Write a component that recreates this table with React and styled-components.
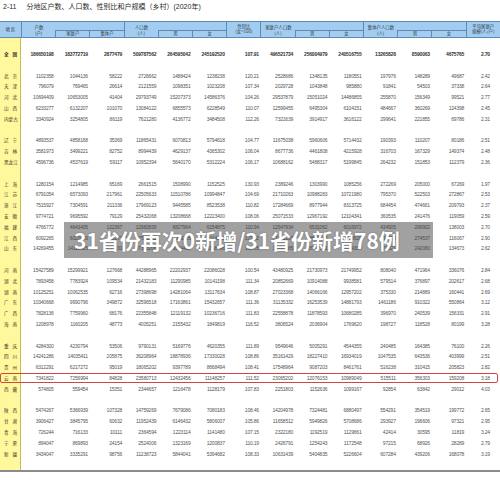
import React from 'react';
import styled, { createGlobalStyle } from 'styled-components';

const GlobalStyle = createGlobalStyle`
  html, body {
    margin: 0;
    padding: 0;
    background: #fff;
  }
  body {
    font-family: 'Liberation Sans', Arial, sans-serif;
  }
`;

const COLS = '21px repeat(14, 34.214px)';
const LINE = '#5f8ab5';

const Page = styled.div`
  position: relative;
  width: 500px;
  height: 481px;
  overflow: hidden;
  background: #fff;
`;

const Title = styled.div`
  height: 20.5px;
  box-sizing: border-box;
  padding: 2.5px 0 0 3px;
  font-family: 'Liberation Sans', 'Noto Sans CJK SC', sans-serif;
  font-size: 7px;
  line-height: 8px;
  color: #2a2a2a;
  white-space: nowrap;

  b {
    font-weight: 400;
    margin-right: 10px;
  }
`;

const Head = styled.div`
  display: grid;
  grid-template-columns: ${COLS};
  grid-template-rows: 8.5px 7px;
  background: #a3cdf0;
  border-top: 0.8px solid ${LINE};
  border-bottom: 0.8px solid ${LINE};
  font-family: 'Noto Sans CJK SC', sans-serif;
  font-size: 4.4px;
  color: #2e3a47;
`;

const HeadCell = styled.div`
  grid-column: ${(p) => p.$col};
  grid-row: ${(p) => p.$row};
  display: flex;
  flex-direction: column;
  align-items: center;
  justify-content: center;
  line-height: 5.4px;
  white-space: nowrap;
  border-left: ${(p) => (p.$left ? `0.8px solid ${LINE}` : 'none')};
  border-top: ${(p) => (p.$top ? `0.8px solid ${LINE}` : 'none')};
  background: ${(p) => (p.$region ? '#a3cdf0' : 'transparent')};
`;

const GroupHead = styled.div`
  grid-column: ${(p) => p.$col};
  grid-row: 1;
  display: flex;
  align-items: flex-end;
  border-left: 0.8px solid ${LINE};
  white-space: nowrap;
`;

const GroupLabel = styled.span`
  width: 33.333%;
  text-align: center;
  line-height: 6px;
`;

const Body = styled.div`
  padding: 10.7px 0 11.3px;
  background: linear-gradient(
    to right,
    #fff89c 0,
    #fff89c 20.3px,
    #c8b95a 20.3px,
    #c8b95a 21px,
    #fff 21px
  );
  border-bottom: 2px solid #8c8c8c;
`;

const Row = styled.div`
  position: relative;
  display: grid;
  grid-template-columns: ${COLS};
  height: 10.8px;
  align-items: center;
  font-weight: ${(p) => (p.$total ? 700 : 400)};

  ${(p) =>
    p.$mark &&
    `
    &::after {
      content: '';
      position: absolute;
      left: 0;
      right: 2px;
      top: 0.6px;
      bottom: 0.2px;
      border: 1.2px solid #d3463f;
      border-radius: 2px;
    }
  `}
`;

const Spacer = styled.div`
  height: 10.8px;
`;

const Label = styled.div`
  padding-left: 4px;
  font-family: 'Noto Sans CJK SC', sans-serif;
  font-size: 4.6px;
  line-height: 6px;
  letter-spacing: ${(p) => (p.$spread ? '3.8px' : '0')};
  color: #3a3426;
  white-space: nowrap;
`;

const Num = styled.div`
  text-align: right;
  padding-right: ${(p) => (p.$last ? '10px' : '1.5px')};
  font-size: 5px;
  line-height: 6px;
  letter-spacing: -0.2px;
  color: ${(p) => (p.$total ? '#333' : '#555')};
  white-space: nowrap;
`;

const Banner = styled.div`
  position: absolute;
  left: 64px;
  top: 222px;
  width: 369px;
  height: 36px;
  box-sizing: border-box;
  padding-left: 10px;
  display: flex;
  align-items: center;
  background: rgba(68, 68, 68, 0.5);
  color: #fff;
  font-family: 'Noto Sans CJK SC', sans-serif;
  font-weight: 700;
  font-size: 21px;
  white-space: nowrap;
  text-shadow: 0 0 2px rgba(0, 0, 0, 0.35);
`;

const total = ['全国', '186650198', '183772719', '2877479', '509787562', '264595042', '245192520', '107.91', '496521734', '256004979', '240516755', '13265828', '8590063', '4675765', '2.70'];

const groups = [
  [
    ['北京', '1102358', '1044136', '58222', '2726662', '1488424', '1238238', '120.21', '2528686', '1348135', '1180551', '197976', '148289', '49687', '2.42'],
    ['天津', '796079', '769465', '26614', '2121559', '1098351', '1023208', '107.34', '2029728', '1043848', '985880', '91841', '54503', '37338', '2.64'],
    ['河北', '10694409', '10653005', '41404', '29793749', '15207373', '14586376', '104.26', '29537879', '15051024', '14486855', '255870', '156349', '99521', '2.77'],
    ['山西', '6233277', '6132207', '101070', '13084122', '6855573', '6228549', '110.07', '12599455', '6495304', '6104151', '484667', '360269', '124398', '2.45'],
    ['内蒙古', '3340924', '3254805', '86119', '7621280', '4136772', '3484508', '112.26', '7321639', '3914917', '3616122', '299641', '221855', '69786', '2.31'],
  ],
  [
    ['辽宁', '4893537', '4858168', '35369', '11865431', '6070813', '5794618', '104.77', '11675038', '5960606', '5714432', '190393', '110207', '80186', '2.51'],
    ['吉林', '3581973', '3499221', '82752', '8994439', '4629137', '4365302', '106.04', '8677736', '4461808', '4215928', '316703', '167329', '149374', '2.48'],
    ['黑龙江', '4596736', '4537619', '59117', '10952394', '5640170', '5312224', '106.17', '10688162', '5488317', '5199845', '264232', '151853', '112379', '2.36'],
  ],
  [
    ['上海', '1280154', '1214985', '65169', '2661515', '1508990', '1152525', '130.93', '2389246', '1303990', '1085256', '272269', '205000', '67269', '1.97'],
    ['江苏', '6791054', '6573093', '217961', '22505633', '11510786', '10994847', '104.69', '21710263', '10988283', '10721980', '795370', '522503', '272867', '2.53'],
    ['浙江', '7515927', '7304591', '211336', '17969123', '9445585', '8523538', '110.82', '17284669', '8977944', '8313725', '684454', '474661', '209793', '2.37'],
    ['安徽', '9774721', '9695592', '79129', '25432068', '13208668', '12223400', '108.06', '25071533', '12967192', '12104341', '360535', '241476', '119059', '2.59'],
    ['福建', '4766772', '4643405', '122367', '12982839', '6827964', '6154875', '110.94', '12547934', '6531062', '6016972', '434905', '296902', '138003', '2.70'],
    ['江西', '6092265', '6022093', '70172', '17532911', '9088216', '8444695', '107.62', '17142307', '8813679', '8328628', '390604', '274537', '116067', '2.90'],
    ['山东', '14269455', '14115825', '153630', '37363206', '19024410', '18338796', '103.65', '36991885', '18727581', '18264304', '371321', '242060', '134673', '2.62'],
  ],
  [
    ['河南', '15427589', '15299921', '127668', '44288965', '22202937', '22086028', '100.54', '43480925', '21730973', '21749952', '808040', '471964', '336076', '2.84'],
    ['湖北', '7893458', '7783924', '109534', '21432183', '11290985', '10141198', '111.34', '20852669', '10914088', '9938581', '579514', '376897', '202617', '2.68'],
    ['湖南', '10125251', '10062535', '62716', '27398698', '14281064', '13117634', '108.87', '27023368', '14066166', '12957202', '375330', '214889', '160441', '2.69'],
    ['广东', '10340668', '9990796', '349872', '32596518', '17163861', '15432657', '111.36', '31135332', '16253539', '14881793', '1461186', '910322', '550864', '3.12'],
    ['广西', '7828136', '7759960', '68176', '22355848', '12119132', '10236716', '111.83', '22558878', '11878593', '10680285', '396970', '240539', '156331', '2.91'],
    ['海南', '1208978', '1160205', '48773', '4005251', '2155432', '1849819', '116.52', '3806524', '2036904', '1769620', '198727', '118528', '80199', '3.28'],
  ],
  [
    ['重庆', '4284300', '4230794', '53506', '9790131', '5169776', '4620355', '111.89', '9549646', '5005291', '4544355', '240485', '164385', '76100', '2.26'],
    ['四川', '14241286', '14035411', '205875', '36208964', '18878936', '17330028', '108.86', '35161429', '18227410', '16934019', '1047535', '643536', '403999', '2.51'],
    ['贵州', '6312291', '6217272', '95019', '18065202', '9397789', '8668494', '108.41', '17548964', '9087203', '8461761', '516238', '310415', '205823', '2.82'],
    ['云南', '7341822', '7256994', '84828', '23580713', '12432456', '11148257', '111.52', '23065202', '12076153', '10989049', '515511', '356303', '159208', '3.18'],
    ['西藏', '574805', '559454', '15351', '2344657', '1216478', '1128179', '107.83', '2251803', '1152636', '1099167', '92854', '63842', '29012', '4.03'],
  ],
  [
    ['陕西', '5474267', '5366939', '107328', '14759269', '7679086', '7080183', '108.46', '14204978', '7324481', '6880497', '554291', '354519', '199772', '2.65'],
    ['甘肃', '3906427', '3845795', '60632', '11952439', '6146432', '5806007', '105.86', '11658512', '5949826', '5708686', '293927', '196606', '97321', '2.95'],
    ['青海', '726244', '716133', '10111', '2364594', '1223114', '1141480', '107.15', '2322180', '1192519', '1129661', '42414', '30595', '11819', '3.24'],
    ['宁夏', '894047', '869893', '24154', '2524006', '1323169', '1200837', '110.19', '2426791', '1254243', '1172548', '97215', '68926', '28289', '2.79'],
    ['新疆', '3434047', '3335291', '98756', '11238723', '5844041', '5394682', '108.33', '10631439', '5404835', '5226604', '607284', '439206', '168078', '3.19'],
  ],
];

const DataRow = ({ row, isTotal, mark }) => {
  const [name, ...values] = row;
  return (
    <Row $total={isTotal} $mark={mark}>
      <Label $spread={name.length === 2}>{name}</Label>
      {values.map((v, i) => (
        <Num key={i} $total={isTotal} $last={i === values.length - 1}>
          {v}
        </Num>
      ))}
    </Row>
  );
};

const Group = ({ col, title, unit, subs }) => {
  const start = Number(col);
  return (
    <>
      <GroupHead $col={`${start} / ${start + 3}`}>
        <GroupLabel>{title}</GroupLabel>
      </GroupHead>
      <HeadCell $col={start} $row={2} $left>
        {unit}
      </HeadCell>
      {subs.map((s, i) => (
        <HeadCell key={s} $col={start + 1 + i} $row={2} $left $top>
          {s}
        </HeadCell>
      ))}
    </>
  );
};

const App = () => (
  <Page>
    <GlobalStyle />
    <Title>
      <b>2-11</b>
      分地区户数、人口数、性别比和户规模（乡村）(2020年)
    </Title>

    <Head>
      <HeadCell $col={1} $row="1 / 3">
        地 区
      </HeadCell>
      <Group col="2" title="户数" unit="(户)" subs={['家庭户', '集体户']} />
      <Group col="5" title="人口数" unit="(人)" subs={['男', '女']} />
      <HeadCell $col={8} $row="1 / 3" $left>
        <span>性别比</span>
        <span>(女=100)</span>
      </HeadCell>
      <Group col="9" title="家庭户人口数" unit="(人)" subs={['男', '女']} />
      <Group col="12" title="集体户人口数" unit="(人)" subs={['男', '女']} />
      <HeadCell $col={15} $row="1 / 3" $left>
        <span>平均家庭户</span>
        <span>规模(人/户)</span>
      </HeadCell>
    </Head>

    <Body>
      <DataRow row={total} isTotal />
      {groups.map((g, gi) => (
        <React.Fragment key={gi}>
          <Spacer />
          {g.map((r) => (
            <DataRow key={r[0]} row={r} mark={r[0] === '云南'} />
          ))}
        </React.Fragment>
      ))}
    </Body>

    <Banner>31省份再次0新增/31省份新增78例</Banner>
  </Page>
);

export default App;
